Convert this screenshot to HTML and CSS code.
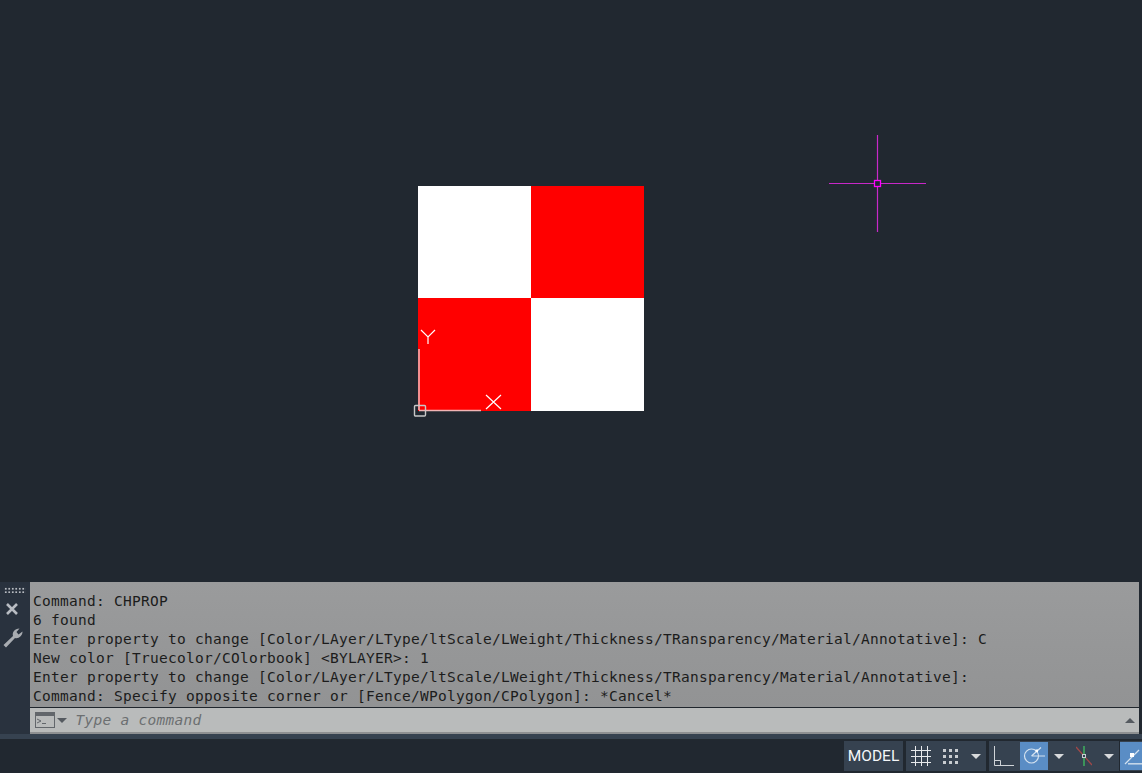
FILE: index.html
```html
<!DOCTYPE html>
<html lang="en">
<head>
<meta charset="utf-8">
<title>CAD</title>
<link rel="stylesheet" href="styles.css">
</head>
<body>
<div class="app">
  <main class="canvas">
    <div class="checker">
      <div class="white"></div><div class="red"></div>
      <div class="red"></div><div class="white"></div>
    </div>
    <svg class="ucs" width="100" height="100" viewBox="0 0 100 100" fill="none">
      <path d="M9 29V90M9 90.5H71" stroke="#f2b4b4" stroke-width="1.6"/>
      <rect x="4.5" y="85.5" width="11" height="10.5" rx="1" stroke="#c8c8c8" stroke-width="1.4"/>
      <path d="M11 10L18 17L25 10M18 17V24" stroke="#fff" stroke-width="1.2"/>
      <path d="M76 75L91 89M91 75L76 89" stroke="#fff" stroke-width="1.2"/>
    </svg>
    <svg class="cursor" width="99" height="99" viewBox="0 0 99 99" fill="none">
      <path d="M49.5 0V45M49.5 52V97M1 48.5H46M53 48.5H98" stroke="#c828c8" stroke-width="1.2"/>
      <rect x="46.5" y="45.5" width="6" height="6" stroke="#ff00ff" stroke-width="1.3"/>
    </svg>
  </main>
  <section class="cmd">
    <aside class="rail">
      <div class="grip"></div>
      <svg class="rail-x" width="14" height="14" viewBox="0 0 14 14"><path d="M2 2L12 12M12 2L2 12" stroke="#b8bcc2" stroke-width="2.6"/></svg>
      <svg class="rail-w" width="20" height="20" viewBox="0 0 20 20"><path d="M0.5 17L10 8C9 4.5 11.5 0.5 16.5 0.5L13.5 4L15.5 6.5L19.5 3.5C19.5 8 15.5 11 12 10L3 19.5Z" fill="#a8acb1"/></svg>
    </aside>
    <div class="panel">
      <div class="history">
        <div>Command: CHPROP</div>
        <div>6 found</div>
        <div>Enter property to change [Color/LAyer/LType/ltScale/LWeight/Thickness/TRansparency/Material/Annotative]: C</div>
        <div>New color [Truecolor/COlorbook] &lt;BYLAYER&gt;: 1</div>
        <div>Enter property to change [Color/LAyer/LType/ltScale/LWeight/Thickness/TRansparency/Material/Annotative]:</div>
        <div>Command: Specify opposite corner or [Fence/WPolygon/CPolygon]: *Cancel*</div>
      </div>
      <div class="input">
        <svg class="prompt" width="20" height="16" viewBox="0 0 20 16" fill="none"><rect x=".5" y=".5" width="19" height="15" stroke="#62666b"/><rect x="1" y="1" width="18" height="3" fill="#62666b"/><path d="M2 7L6 9L2 11M7 11.5H11" stroke="#62666b"/></svg>
        <span class="caret"></span>
        <span class="placeholder">Type a command</span>
        <span class="up"></span>
      </div>
    </div>
  </section>
  <div class="divider"></div>
  <footer class="status">
    <div class="group model">MODEL</div>
    <div class="group">
      <svg class="grid-ic" width="20" height="20" viewBox="0 0 20 20" fill="none"><path d="M4.5 0V20M10.5 0V20M16.5 0V20M0 4.5H20M0 10.5H20M0 16.5H20" stroke="#e8eaec"/></svg>
      <svg class="snap-ic" width="15" height="15" viewBox="0 0 15 15" fill="#c8ccd0"><rect x="0" y="0" width="3" height="3"/><rect x="6" y="0" width="3" height="3"/><rect x="12" y="0" width="3" height="3"/><rect x="0" y="6" width="3" height="3"/><rect x="6" y="6" width="3" height="3"/><rect x="12" y="6" width="3" height="3"/><rect x="0" y="12" width="3" height="3"/><rect x="6" y="12" width="3" height="3"/><rect x="12" y="12" width="3" height="3"/></svg>
      <span class="drop snap-drop"></span>
    </div>
    <div class="group">
      <svg class="ortho-ic" width="20" height="20" viewBox="0 0 20 20" fill="none"><path d="M0.5 0V19.5H20M0.5 14.5H6.5V19.5" stroke="#d0d4d8"/></svg>
      <span class="on"><svg width="22" height="20" viewBox="0 0 22 20" fill="none"><circle cx="8.5" cy="10" r="7" stroke="#d4e2f0" stroke-width="1.2"/><path d="M8.5 10L18 1.5M8.5 10H22" stroke="#d4e2f0" stroke-width="1.2"/><rect x="12.5" y="3.5" width="2.5" height="2.5" fill="#fff"/></svg></span>
      <span class="drop polar-drop"></span>
      <svg class="iso-ic" width="16" height="20" viewBox="0 0 16 20" fill="none"><path d="M0 1L16 19" stroke="#a04848" stroke-width="1.3"/><path d="M8 0V20" stroke="#40c060" stroke-width="1.3"/><rect x="6.5" y="8.5" width="3" height="3" fill="#364250" stroke="#c8ccd0"/></svg>
      <span class="drop iso-drop"></span>
    </div>
    <div class="group last">
      <span class="on"><svg width="22" height="20" viewBox="0 0 22 20" fill="none"><path d="M5 18L19 4" stroke="#d4e2f0" stroke-width="1.2"/><path d="M8 17.8H22" stroke="#c4d6e8" stroke-width="1.6"/><rect x="10" y="7" width="4" height="4" fill="#fff"/></svg></span>
    </div>
  </footer>
</div>
</body>
</html>
```
FILE: styles.css
```css
* { box-sizing: border-box; }
html, body { margin: 0; padding: 0; height: 100%; overflow: hidden; }
body { background: #212830; font-family: "DejaVu Sans Mono", monospace; }
.app { width: 1142px; height: 773px; display: flex; flex-direction: column; }
.canvas { position: relative; height: 582px; flex: none; }
.checker { position: absolute; left: 418px; top: 186px; width: 226px; height: 225px; display: grid; grid-template-columns: 113px 113px; grid-template-rows: 112px 113px; }
.white { background: #fff; }
.red { background: #f00; }
.ucs { position: absolute; left: 410px; top: 320px; }
.cursor { position: absolute; left: 828px; top: 135px; }
.cmd { display: flex; height: 152px; flex: none; }
.rail { width: 30px; flex: none; display: flex; flex-direction: column; background: #29323e; padding-left: 3px; }
.grip { width: 22px; height: 6px; margin-top: 5px; margin-left: 1px; background-image: radial-gradient(circle, #b8bcc2 1px, transparent 1.2px); background-size: 3.5px 3.5px; }
.rail-x { margin: 9px 0 0 2px; }
.rail-w { margin-top: 12px; }
.panel { width: 1109px; flex: none; display: flex; flex-direction: column; }
.history { flex: 1; background: linear-gradient(#9a9b9c, #929394); color: #1c1c1c; font-size: 14.5px; letter-spacing: 0.27px; line-height: 19px; padding: 10px 0 0 3px; white-space: nowrap; overflow: hidden; border-bottom: 1px solid #20262d; }
.input { height: 26px; flex: none; display: flex; align-items: center; background: #b9bbbb; border-bottom: 2px solid #8e9092; padding-left: 5px; position: relative; }
.prompt { flex: none; }
.caret, .drop, .up { width: 0; height: 0; border-left: 5px solid transparent; border-right: 5px solid transparent; border-top: 5px solid #555a60; flex: none; }
.caret { margin-left: 2px; }
.placeholder { margin-left: 8.5px; font-size: 14.5px; letter-spacing: 0.27px; font-style: italic; color: #6c6f71; }
.up { position: absolute; right: 4px; top: 10px; border-top: none; border-bottom: 5px solid #555a60; }
.divider { height: 5px; flex: none; background: #364250; }
.status { flex: 1; display: flex; justify-content: flex-end; align-items: flex-start; padding-top: 2px; gap: 3px; }
.group { height: 30px; display: flex; align-items: center; background: #364250; }
.model { width: 59px; justify-content: center; color: #f4f6f8; font: 15.5px Roboto, sans-serif; }
.grid-ic { flex: none; margin-left: 5px; }
.snap-ic { flex: none; margin-left: 12px; }
.drop { border-top-color: #d8dadc; }
.snap-drop { margin: 0 5px 0 13px; }
.ortho-ic { flex: none; margin: 0 6px 0 5px; }
.on { width: 28px; height: 28px; display: flex; align-items: center; justify-content: center; background: #5a8dc5; flex: none; }
.polar-drop { margin-left: 6px; }
.iso-ic { flex: none; margin-left: 12px; }
.iso-drop { margin: 0 5px 0 12px; }
.last { width: 22px; margin-left: -2px; }
.last .on { width: 22px; }
```
